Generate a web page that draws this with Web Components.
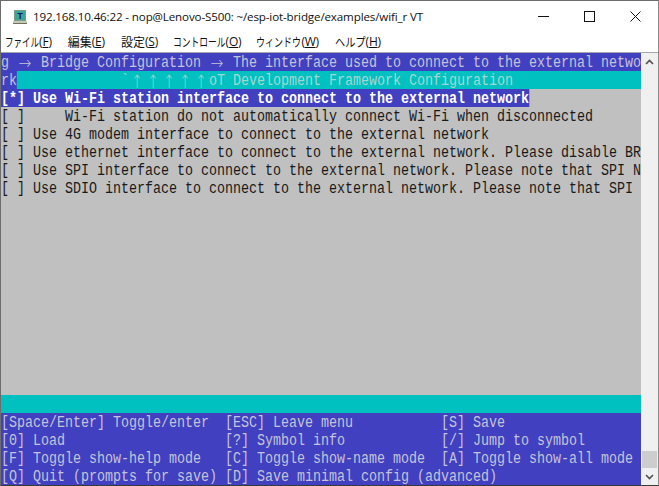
<!DOCTYPE html>
<html>
<head>
<meta charset="utf-8">
<title>VT</title>
<style>
  html, body { margin: 0; padding: 0; background: #fff; }
</style>
</head>
<body>
<term-window>
  <title-bar slot="title">192.168.10.46:22 - nop@Lenovo-S500: ~/esp-iot-bridge/examples/wifi_r VT</title-bar>
  <menu-bar slot="menu">
    <menu-item label="ファイル" key="F" squeeze="0.71" gap="16"></menu-item>
    <menu-item label="編集" key="E" squeeze="1" gap="16"></menu-item>
    <menu-item label="設定" key="S" squeeze="1" gap="15"></menu-item>
    <menu-item label="コントロール" key="O" squeeze="0.73" gap="15"></menu-item>
    <menu-item label="ウィンドウ" key="W" squeeze="0.75" gap="16"></menu-item>
    <menu-item label="ヘルプ" key="H" squeeze="0.85" gap="0"></menu-item>
  </menu-bar>
  <term-screen slot="screen">
    <term-row tone="blue">g <wide-glyph>→</wide-glyph> Bridge Configuration <wide-glyph>→</wide-glyph> The interface used to connect to the external network</term-row>
    <term-row tone="blue">rk<term-span tone="cyan" cols="78">             `<wide-glyph>↑</wide-glyph><wide-glyph>↑</wide-glyph><wide-glyph>↑</wide-glyph><wide-glyph>↑</wide-glyph><wide-glyph>↑</wide-glyph>oT Development Framework Configuration</term-span></term-row>
    <term-row tone="gray"><term-span tone="select">[*] Use Wi-Fi station interface to connect to the external network</term-span></term-row>
    <term-row tone="gray">[ ]     Wi-Fi station do not automatically connect Wi-Fi when disconnected</term-row>
    <term-row tone="gray">[ ] Use 4G modem interface to connect to the external network</term-row>
    <term-row tone="gray">[ ] Use ethernet interface to connect to the external network. Please disable BR</term-row>
    <term-row tone="gray">[ ] Use SPI interface to connect to the external network. Please note that SPI N</term-row>
    <term-row tone="gray">[ ] Use SDIO interface to connect to the external network. Please note that SPI </term-row>
    <term-row tone="gray" fill></term-row>
    <term-row tone="cyan"></term-row>
    <term-row tone="blue">[Space/Enter] Toggle/enter  [ESC] Leave menu           [S] Save</term-row>
    <term-row tone="blue">[0] Load                    [?] Symbol info            [/] Jump to symbol</term-row>
    <term-row tone="blue">[F] Toggle show-help mode   [C] Toggle show-name mode  [A] Toggle show-all mode</term-row>
    <term-row tone="blue">[Q] Quit (prompts for save) [D] Save minimal config (advanced)</term-row>
  </term-screen>
  <scroll-bar slot="scroll"></scroll-bar>
</term-window>

<script>
class TermWindow extends HTMLElement {
    constructor() {
        super();
        this.shadowDOM = this.attachShadow({mode: "open"});
    }

    connectedCallback() {
        this.shadowDOM.innerHTML = `
        <style>
          :host {
            display: grid;
            grid-template-columns: 640px 1fr;
            grid-template-rows: 32px 20px 1fr;
            grid-template-areas: "title title" "menu menu" "screen scroll";
            width: 659px;
            height: 486px;
            box-sizing: border-box;
            border: 1px solid #6d6d6d;
            border-bottom-color: #3a3a3a;
            border-right-color: #8a8a8a;
            background: #fff;
            overflow: hidden;
          }
          ::slotted([slot="title"]) { grid-area: title; }
          ::slotted([slot="menu"]) { grid-area: menu; }
          ::slotted([slot="screen"]) { grid-area: screen; }
          ::slotted([slot="scroll"]) { grid-area: scroll; }
        </style>
        <slot name="title"></slot>
        <slot name="menu"></slot>
        <slot name="screen"></slot>
        <slot name="scroll"></slot>
        `;
    }
}

class TitleBar extends HTMLElement {
    constructor() {
        super();
        this.shadowDOM = this.attachShadow({mode: "open"});
    }

    connectedCallback() {
        this.shadowDOM.innerHTML = `
        <style>
          :host {
            display: flex;
            align-items: center;
            padding-left: 11px;
            font: 11.6px "Open Sans", "Noto Sans", sans-serif;
            letter-spacing: -0.14px;
            color: #111;
            background: #fff;
          }
          .icon { width: 16px; height: 16px; margin-right: 5px; flex: none; }
          .text { flex: 1; white-space: nowrap; padding-bottom: 2px; }
          .btns { display: flex; align-self: stretch; padding-bottom: 2px; }
          .btn { width: 46px; display: flex; align-items: center; justify-content: center; }
        </style>
        <svg class="icon" viewBox="0 0 16 16">
          <rect x="2.500" y="1.500" width="11" height="10" fill="#3aa890" stroke="#7d9c8c"/>
          <text x="8" y="9.600" font-family="Liberation Sans" font-size="8.500" font-weight="bold" fill="#101080" text-anchor="middle">T</text>
          <path d="M1 12h14v2H1z" fill="#c4c8b4"/>
          <path d="M1 14.500h14" stroke="#70725f"/>
        </svg>
        <span class="text"><slot></slot></span>
        <div class="btns">
          <div class="btn"><svg width="11" height="11" viewBox="0 0 11 11"><path d="M0 5.500h11" stroke="#111"/></svg></div>
          <div class="btn"><svg width="11" height="11" viewBox="0 0 11 11"><rect x=".5" y=".5" width="10" height="10" fill="none" stroke="#111"/></svg></div>
          <div class="btn"><svg width="11" height="11" viewBox="0 0 11 11"><path d="M.5.5l10 10M10.500.5l-10 10" stroke="#111" fill="none"/></svg></div>
        </div>
        `;
    }
}

class MenuBar extends HTMLElement {
    constructor() {
        super();
        this.shadowDOM = this.attachShadow({mode: "open"});
    }

    connectedCallback() {
        this.shadowDOM.innerHTML = `
        <style>
          :host {
            display: flex;
            align-items: center;
            padding-left: 4px;
            padding-bottom: 3px;
            box-sizing: border-box;
            border-bottom: 1px solid #a8a8a8;
            background: #fff;
            font: 12px "Noto Sans CJK JP", sans-serif;
            color: #111;
          }
        </style>
        <slot></slot>
        `;
    }
}

class MenuItem extends HTMLElement {
    constructor() {
        super();
        this.shadowDOM = this.attachShadow({mode: "open"});
    }

    connectedCallback() {
        const label = this.getAttribute("label");
        const key = this.getAttribute("key");
        const gap = this.getAttribute("gap") || 0;
        const squeeze = Number(this.getAttribute("squeeze")) || 1;
        this.shadowDOM.innerHTML = `
        <style>
          :host { display: flex; margin-right: ${gap}px; white-space: nowrap; }
          .label { display: block; width: ${label.length * 12 * squeeze}px; }
          .label span { display: block; transform: scaleX(${squeeze}); transform-origin: 0 0; }
          .key { font-family: "Open Sans", sans-serif; letter-spacing: -0.2px; }
          u { text-underline-offset: 1px; }
        </style>
        <span class="label"><span>${label}</span></span><span class="key">(<u>${key}</u>)</span>
        `;
    }
}

class TermScreen extends HTMLElement {
    constructor() {
        super();
        this.shadowDOM = this.attachShadow({mode: "open"});
    }

    connectedCallback() {
        this.shadowDOM.innerHTML = `
        <style>
          :host {
            display: flex;
            flex-direction: column;
            min-height: 0;
            overflow: hidden;
            background: #c0c0c0;
            font: 16px "Liberation Mono", monospace;
          }
        </style>
        <slot></slot>
        `;
    }
}

const TONES = {
    blue: "background: #4040c0; color: #c4c4d8;",
    cyan: "background: #00c0c0; color: #a0d8d4;",
    gray: "background: #c0c0c0; color: #1a1a1a;",
    select: "background: #4040c0; color: #fff; font-weight: bold;"
};

// 16px mono is 9.6px wide, the terminal cell is 8px, so the line is narrowed
class TermRow extends HTMLElement {
    constructor() {
        super();
        this.shadowDOM = this.attachShadow({mode: "open"});
    }

    connectedCallback() {
        const tone = TONES[this.getAttribute("tone")] || "";
        const sizing = this.hasAttribute("fill") ? "flex: 1;" : "flex: none; height: 18px;";
        this.shadowDOM.innerHTML = `
        <style>
          :host {
            display: block;
            ${sizing}
            ${tone}
            overflow: hidden;
          }
          .line {
            width: 768px;
            height: 18px;
            line-height: 20px;
            white-space: pre;
            transform: scaleX(0.8333);
            transform-origin: 0 0;
          }
        </style>
        <div class="line"><slot></slot></div>
        `;
    }
}

// no whitespace around the slot: these sit inside white-space: pre
class TermSpan extends HTMLElement {
    constructor() {
        super();
        this.shadowDOM = this.attachShadow({mode: "open"});
    }

    connectedCallback() {
        const tone = TONES[this.getAttribute("tone")] || "";
        const cols = this.getAttribute("cols");
        const width = cols ? `width: ${cols * 9.6}px;` : "";
        this.shadowDOM.innerHTML = `<style>
          :host {
            display: inline-block;
            height: 18px;
            vertical-align: top;
            ${width}
            ${tone}
          }
        </style><slot></slot>`;
    }
}

// arrows take two cells in the terminal
class WideGlyph extends HTMLElement {
    constructor() {
        super();
        this.shadowDOM = this.attachShadow({mode: "open"});
    }

    connectedCallback() {
        this.shadowDOM.innerHTML = `<style>
          :host {
            display: inline-block;
            width: 19.2px;
            height: 18px;
            text-align: center;
            font-family: "Noto Sans CJK JP", sans-serif;
            font-size: 15px;
            font-weight: 300;
            line-height: 19px;
            vertical-align: top;
          }
        </style><slot></slot>`;
    }
}

class ScrollBar extends HTMLElement {
    constructor() {
        super();
        this.shadowDOM = this.attachShadow({mode: "open"});
    }

    connectedCallback() {
        this.shadowDOM.innerHTML = `
        <style>
          :host {
            display: flex;
            flex-direction: column;
            align-items: center;
            min-height: 0;
            background: #f0f0f0;
          }
          .arrow { height: 17px; flex: none; display: flex; align-items: center; justify-content: center; }
          .track { flex: 1; width: 100%; display: flex; flex-direction: column; justify-content: flex-end; }
          .thumb { height: 17px; margin: 0 1px; background: #cdcdcd; }
        </style>
        <div class="arrow"><svg width="9" height="6" viewBox="0 0 9 6"><path d="M1 5l3.500-3.500L8 5" fill="none" stroke="#505050" stroke-width="1.600"/></svg></div>
        <div class="track"><div class="thumb"></div></div>
        <div class="arrow"><svg width="9" height="6" viewBox="0 0 9 6"><path d="M1 1l3.500 3.500L8 1" fill="none" stroke="#505050" stroke-width="1.600"/></svg></div>
        `;
    }
}

customElements.define("term-window", TermWindow);
customElements.define("title-bar", TitleBar);
customElements.define("menu-bar", MenuBar);
customElements.define("menu-item", MenuItem);
customElements.define("term-screen", TermScreen);
customElements.define("term-row", TermRow);
customElements.define("term-span", TermSpan);
customElements.define("wide-glyph", WideGlyph);
customElements.define("scroll-bar", ScrollBar);
</script>
</body>
</html>
